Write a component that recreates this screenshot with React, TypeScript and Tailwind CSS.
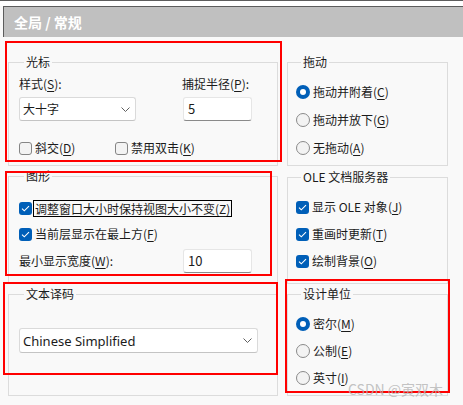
import React from "react";

type Children = { children?: React.ReactNode };

// access key like (S) with the letter underlined
const Key = ({ k }: { k: string }) => (
  <>
    (<span className="underline underline-offset-2 decoration-1">{k}</span>)
  </>
);

const Group = ({
  title,
  className,
  children,
}: Children & { title: string; className: string }) => (
  <div className={`border border-[#dcdcdc] ${className}`}>
    <div className="-mt-[9px] ml-[5px] w-fit px-[2px] text-[12px] leading-4 bg-[#f9f9f9]">
      {title}
    </div>
    {children}
  </div>
);

const Chevron = () => (
  <svg width="9" height="5" viewBox="0 0 9 5" className="shrink-0">
    <polyline points="0.5,0.5 4.5,4.5 8.5,0.5" fill="none" stroke="#5f5f5f" strokeWidth="1" />
  </svg>
);

const Select = ({ value, className, textClass }: { value: string; className: string; textClass: string }) => (
  <div
    className={`flex items-center justify-between bg-white border border-[#dadada] border-b-[#c4c4c4] rounded-[3px] pl-[3px] pr-[5px] ${className}`}
  >
    <span className={textClass}>{value}</span>
    <Chevron />
  </div>
);

const Input = ({ value }: { value: string }) => (
  <div className="w-[69px] h-[24px] bg-white border border-[#e6e6e6] border-b-[#8a8a8a] rounded-[3px] pl-[4px] flex items-center text-[13px]">
    {value}
  </div>
);

const CheckBox = ({ checked }: { checked?: boolean }) =>
  checked ? (
    <span className="w-[13px] h-[13px] rounded-[3px] bg-[#005fb8] flex items-center justify-center shrink-0">
      <svg width="9" height="7" viewBox="0 0 9 7">
        <polyline points="1,3.6 3.3,5.8 8,1.2" fill="none" stroke="white" strokeWidth="1.1" />
      </svg>
    </span>
  ) : (
    <span className="w-[13px] h-[13px] rounded-[3px] border border-[#858585] bg-[#f3f3f3] shrink-0" />
  );

const Radio = ({ checked }: { checked?: boolean }) =>
  checked ? (
    <span className="w-[14px] h-[14px] rounded-full bg-[#005fb8] flex items-center justify-center shrink-0">
      <span className="w-[6px] h-[6px] rounded-full bg-white" />
    </span>
  ) : (
    <span className="w-[14px] h-[14px] rounded-full border border-[#8a8a8a] bg-[#f3f3f3] shrink-0" />
  );

const Option = ({
  control,
  children,
  focused,
  className = "",
}: Children & { control: React.ReactNode; focused?: boolean; className?: string }) => (
  <div className={`flex items-center h-4 ${className}`}>
    {control}
    {focused ? (
      <span className="ml-[1px] px-[1px] border border-black leading-[15px]">{children}</span>
    ) : (
      <span className="ml-[3px]">{children}</span>
    )}
  </div>
);

export default function App() {
  return (
    <div className="relative w-[463px] h-[405px] overflow-hidden bg-[#f9f9f9] text-[#1b1b1b] text-[12px] leading-4 font-['Noto_Sans_CJK_SC',sans-serif]">
      {/* title strip */}
      <div className="h-px bg-[#5c5c5c]" />
      <div className="h-[5px] bg-white" />
      <div className="ml-[3px] h-[31px] border-t border-l border-[#5c5c5c] bg-[#c0c0c0] pl-[10px] flex items-center text-white text-[14px] font-bold">
        全局 / 常规
      </div>

      <div className="flex gap-[9px] pl-[8px] pt-[25px]">
        {/* left column */}
        <div className="w-[270px] flex flex-col">
          <Group title="光标" className="h-[104px] pl-[10px]">
            <div className="flex mt-[6px]">
              <div className="w-[164px]">
                <div>
                  样式<Key k="S" />:
                </div>
                <Select value="大十字" className="mt-[5px] w-[117px] h-[24px]" textClass="text-[12px]" />
              </div>
              <div>
                <div className="-ml-px">
                  捕捉半径<Key k="P" />:
                </div>
                <div className="mt-[5px]">
                  <Input value="5" />
                </div>
              </div>
            </div>
            <div className="flex mt-[19px]">
              <Option control={<CheckBox />} className="w-[96px]">
                斜交<Key k="D" />
              </Option>
              <Option control={<CheckBox />}>
                禁用双击<Key k="K" />
              </Option>
            </div>
          </Group>

          <Group title="图形" className="mt-[10px] h-[108px] pl-[10px]">
            <Option control={<CheckBox checked />} focused className="mt-[16px]">
              调整窗口大小时保持视图大小不变<Key k="Z" />
            </Option>
            <Option control={<CheckBox checked />} className="mt-[10px]">
              当前层显示在最上方<Key k="F" />
            </Option>
            <div className="flex items-center mt-[7px]">
              <div className="w-[164px]">
                最小显示宽度<Key k="W" />:
              </div>
              <Input value="10" />
            </div>
          </Group>

          <Group title="文本译码" className="mt-[10px] h-[102px] pl-[10px]">
            <Select
              value="Chinese Simplified"
              className="mt-[26px] w-[239px] h-[25px]"
              textClass="text-[13px] font-['Noto_Sans',sans-serif]"
            />
          </Group>
        </div>

        {/* right column */}
        <div className="w-[161px] flex flex-col">
          <Group title="拖动" className="h-[104px] pl-[8px]">
            <div className="flex flex-col gap-[12px] mt-[14px]">
              <Option control={<Radio checked />}>
                拖动并附着<Key k="C" />
              </Option>
              <Option control={<Radio />}>
                拖动并放下<Key k="G" />
              </Option>
              <Option control={<Radio />}>
                无拖动<Key k="A" />
              </Option>
            </div>
          </Group>

          <Group title="OLE 文档服务器" className="mt-[11px] h-[107px] pl-[8px]">
            <div className="flex flex-col gap-[11px] mt-[14px]">
              <Option control={<CheckBox checked />}>
                显示 OLE 对象<Key k="J" />
              </Option>
              <Option control={<CheckBox checked />}>
                重画时更新<Key k="T" />
              </Option>
              <Option control={<CheckBox checked />}>
                绘制背景<Key k="O" />
              </Option>
            </div>
          </Group>

          <Group title="设计单位" className="mt-[10px] h-[102px] pl-[8px]">
            <div className="flex flex-col gap-[11px] mt-[14px]">
              <Option control={<Radio checked />}>
                密尔<Key k="M" />
              </Option>
              <Option control={<Radio />}>
                公制<Key k="E" />
              </Option>
              <Option control={<Radio />}>
                英寸<Key k="I" />
              </Option>
            </div>
          </Group>
        </div>
      </div>

      {/* red annotation boxes */}
      <div className="absolute left-[5px] top-[41px] w-[277px] h-[121px] border-2 border-[#ff0000]" />
      <div className="absolute left-[5px] top-[171px] w-[267px] h-[105px] border-2 border-[#ff0000]" />
      <div className="absolute left-[3px] top-[282px] w-[275px] h-[93px] border-2 border-[#ff0000]" />
      <div className="absolute left-[285px] top-[279px] w-[165px] h-[114px] border-2 border-[#ff0000]" />

      {/* watermark */}
      <div className="absolute left-[348px] top-[380px] text-[14px] leading-[18px] text-[#b4b4b4]/80 font-['Noto_Sans_CJK_SC',sans-serif]">
        CSDN @寅双木
      </div>
    </div>
  );
}
